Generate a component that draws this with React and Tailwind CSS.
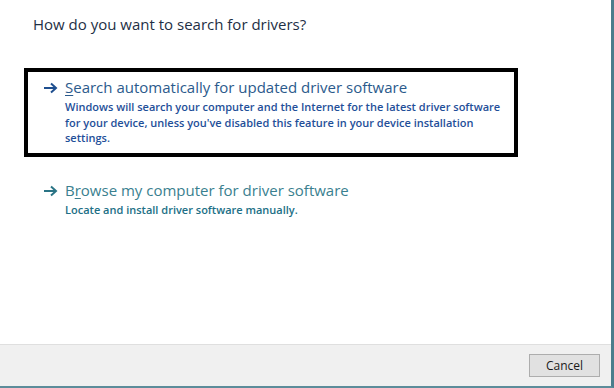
import React from 'react';

const Arrow = ({ color }) => (
  <svg width="15" height="12" viewBox="0 0 15 12" className="shrink-0 mt-[5px]">
    <path d="M1 6h12M8 1.5L13 6l-5 4.5" fill="none" stroke={color} strokeWidth="2" />
  </svg>
);

const Option = ({ title, accessIndex, desc, titleColor, descColor, arrowColor }) => (
  <div className="flex gap-[7px]">
    <Arrow color={arrowColor} />
    <div>
      <div className="text-[15px] leading-[20px]" style={{ color: titleColor }}>
        {title.slice(0, accessIndex)}
        <span className="underline underline-offset-2">{title[accessIndex]}</span>
        {title.slice(accessIndex + 1)}
      </div>
      <p className="mt-[2px] text-[11px] font-semibold leading-[15.5px] whitespace-nowrap" style={{ color: descColor }}>
        {desc}
      </p>
    </div>
  </div>
);

export default function App() {
  return (
    <div
      className="w-[614px] h-[388px] bg-white flex flex-col border-r-[3px] border-r-[#4b7d8c] border-b-2 border-b-[#5c8c9a]"
      style={{ fontFamily: '"Open Sans", "Noto Sans", sans-serif' }}
    >
      <div className="flex-1 pl-[33px] pt-[13px]">
        <h1 className="text-[15px] text-[#1e2f45] leading-[22px]">How do you want to search for drivers?</h1>

        <div className="mt-[33px] -ml-[9px] w-[494px] border-[4px] border-black pl-[15px] pt-[5px] pb-[7px]">
          <Option
            title="Search automatically for updated driver software"
            accessIndex={0}
            desc={
              <>
                Windows will search your computer and the Internet for the latest driver software
                <br />
                for your device, unless you've disabled this feature in your device installation
                <br />
                settings.
              </>
            }
            titleColor="#2b5a8c"
            descColor="#1f4f99"
            arrowColor="#1f4f8f"
          />
        </div>

        <div className="mt-[23px] pl-[10px]">
          <Option
            title="Browse my computer for driver software"
            accessIndex={1}
            desc="Locate and install driver software manually."
            titleColor="#3a7f8f"
            descColor="#216f86"
            arrowColor="#2a7485"
          />
        </div>
      </div>

      <div className="h-[42px] bg-[#f0f0f0] border-t border-t-[#dfdfdf] flex items-center justify-end pr-[11px]">
        <button className="w-[71px] h-[23px] bg-[#e1e1e1] border border-[#adadad] text-[12px] text-[#1a1a1a]">
          Cancel
        </button>
      </div>
    </div>
  );
}
